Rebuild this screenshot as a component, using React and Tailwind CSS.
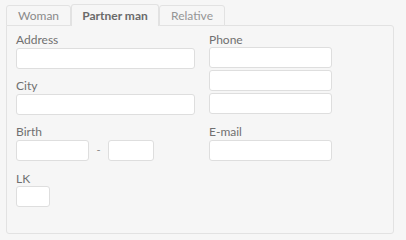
import React from 'react'

const font = { fontFamily: 'Lato, "Open Sans", sans-serif' }

function Field({ className = '' }) {
  return (
    <input
      type="text"
      className={`block h-[21px] rounded-[3px] border border-[#dedede] bg-white outline-none ${className}`}
    />
  )
}

function Label({ children, className = '' }) {
  return <div className={`h-[15px] text-[12px] leading-[15px] text-[#707070] ${className}`}>{children}</div>
}

export default function App() {
  return (
    <div className="h-[240px] w-[406px] bg-[#f6f6f6] pl-[6px] pt-[5px]" style={font}>
      <div className="flex h-[21px] items-end">
        <div className="flex h-[21px] w-[65px] items-center justify-center rounded-t-[3px] border border-[#e2e2e2] bg-[#f6f6f6] text-[12px] text-[#8a8a8a]">
          Woman
        </div>
        <div className="relative z-10 flex h-[22px] w-[88px] items-center justify-center rounded-t-[3px] border border-b-0 border-[#e2e2e2] bg-[#f6f6f6] text-[12px] font-bold text-[#6a6a6a]">
          Partner man
        </div>
        <div className="flex h-[21px] w-[66px] items-center justify-center rounded-t-[3px] border border-[#e2e2e2] bg-[#f6f6f6] text-[12px] text-[#959595]">
          Relative
        </div>
      </div>
      <div className="-mt-px h-[209px] w-[388px] rounded-b-[3px] rounded-tr-[3px] border border-[#e2e2e2] bg-[#f6f6f6] pl-[9px] pt-[6px]">
        <div className="flex gap-[14px]">
          <div className="w-[179px]">
            <Label>Address</Label>
            <Field className="mt-[1px] w-[179px]" />
            <Label className="mt-[9px]">City</Label>
            <Field className="mt-[1px] w-[179px]" />
          </div>
          <div className="w-[123px]">
            <Label>Phone</Label>
            <Field className="mt-0 w-[123px]" />
            <Field className="mt-[2px] w-[123px]" />
            <Field className="mt-[2px] w-[123px]" />
          </div>
        </div>
        <div className="mt-[9px] flex gap-[14px]">
          <div className="w-[179px]">
            <Label>Birth</Label>
            <div className="mt-[1px] flex items-center">
              <Field className="w-[73px]" />
              <span className="w-[19px] text-center text-[11px] text-[#8a8a8a]">-</span>
              <Field className="w-[46px]" />
            </div>
          </div>
          <div className="w-[123px]">
            <Label>E-mail</Label>
            <Field className="mt-[1px] w-[123px]" />
          </div>
        </div>
        <Label className="mt-[10px]">LK</Label>
        <Field className="mt-[0px] h-[20px] w-[34px]" />
      </div>
    </div>
  )
}
